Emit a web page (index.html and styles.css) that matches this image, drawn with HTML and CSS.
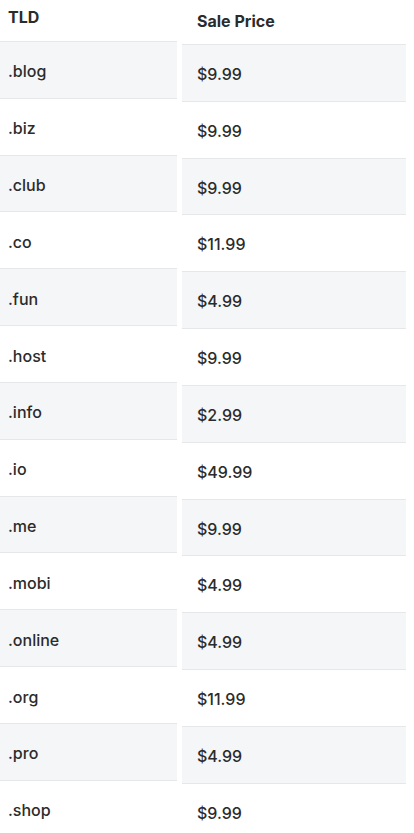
FILE: index.html
```html
<!DOCTYPE html>
<html>
<head>
<meta charset="utf-8">
<link rel="stylesheet" href="styles.css">
</head>
<body>
<div class="tables">
  <div class="col col-tld">
    <div class="head">TLD</div>
    <div class="cell alt">.blog</div>
    <div class="cell">.biz</div>
    <div class="cell alt">.club</div>
    <div class="cell">.co</div>
    <div class="cell alt">.fun</div>
    <div class="cell">.host</div>
    <div class="cell alt">.info</div>
    <div class="cell">.io</div>
    <div class="cell alt">.me</div>
    <div class="cell">.mobi</div>
    <div class="cell alt">.online</div>
    <div class="cell">.org</div>
    <div class="cell alt">.pro</div>
    <div class="cell">.shop</div>
  </div>
  <div class="col col-price">
    <div class="head">Sale Price</div>
    <div class="cell alt">$9.99</div>
    <div class="cell">$9.99</div>
    <div class="cell alt">$9.99</div>
    <div class="cell">$11.99</div>
    <div class="cell alt">$4.99</div>
    <div class="cell">$9.99</div>
    <div class="cell alt">$2.99</div>
    <div class="cell">$49.99</div>
    <div class="cell alt">$9.99</div>
    <div class="cell">$4.99</div>
    <div class="cell alt">$4.99</div>
    <div class="cell">$11.99</div>
    <div class="cell alt">$4.99</div>
    <div class="cell">$9.99</div>
  </div>
</div>
</body>
</html>
```
FILE: styles.css
```css
html, body {
  margin: 0;
  padding: 0;
  background: #ffffff;
}
body {
  font-family: Inter, "Noto Sans", sans-serif;
  font-size: 16px;
  font-weight: 500;
  color: #2b2b2b;
  overflow: hidden;
  height: 833px;
}
.tables {
  display: flex;
  gap: 5px;
  width: 406px;
}
.col {
  display: flex;
  flex-direction: column;
}
.col-tld {
  width: 177px;
}
.col-price {
  width: 224px;
}
.head {
  font-weight: 700;
  box-sizing: border-box;
  border-bottom: 1px solid #e6e7e9;
  display: flex;
  align-items: flex-start;
}
.col-tld .head {
  height: 42px;
  padding: 7px 8px 0;
}
.col-price .head {
  height: 45px;
  padding: 11px 15px 0;
}
.cell {
  box-sizing: border-box;
  height: 56.83px;
  flex: none;
  border-bottom: 1px solid #e6e7e9;
  display: flex;
  align-items: center;
}
.col-tld .cell {
  padding: 3px 8px 0;
}
.col-price .cell {
  padding: 2px 15px 0;
}
.cell.alt {
  background: #f5f6f8;
}
```
